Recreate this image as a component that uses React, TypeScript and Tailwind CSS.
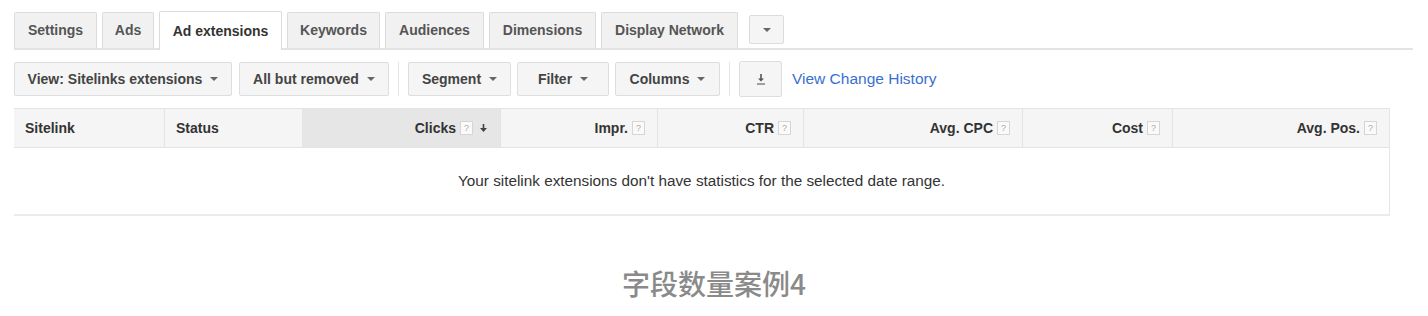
const tabs = [
  { label: "Settings", w: "w-[83px]" },
  { label: "Ads", w: "w-[52px]" },
  { label: "Ad extensions", w: "w-[123px]", active: true },
  { label: "Keywords", w: "w-[93px]" },
  { label: "Audiences", w: "w-[99px]" },
  { label: "Dimensions", w: "w-[107px]" },
  { label: "Display Network", w: "w-[137px]" },
];

const cols = [
  { label: "Sitelink", w: "w-[150px]", left: true },
  { label: "Status", w: "w-[138px]", left: true },
  { label: "Clicks", w: "w-[198px]", sorted: true },
  { label: "Impr.", w: "w-[157px]" },
  { label: "CTR", w: "w-[146px]" },
  { label: "Avg. CPC", w: "w-[219px]" },
  { label: "Cost", w: "w-[150px]" },
  { label: "Avg. Pos.", w: "flex-1" },
];

function Caret() {
  return (
    <span className="inline-block w-0 h-0 ml-[8px] border-l-[4px] border-r-[4px] border-t-[4px] border-l-transparent border-r-transparent border-t-[#666] align-middle" />
  );
}

function Help() {
  return (
    <span className="inline-flex items-center justify-center w-[13px] h-[14px] ml-[4px] border border-[#d6d6d6] bg-[#fafafa] text-[9px] font-normal text-[#aaa] leading-none">
      ?
    </span>
  );
}

function ToolButton({ label, w }: { label: string; w: string }) {
  return (
    <button className={`${w} h-[34px] flex items-center justify-center rounded-[2px] border border-[#dedede] bg-[#f5f5f5] text-[14px] font-bold text-[#444]`}>
      {label}
      <Caret />
    </button>
  );
}

export default function App() {
  return (
    <div className="w-[1428px] h-[316px] bg-white font-['Liberation_Sans',Arial,sans-serif]">
      <div className="pl-[14px] pr-[15px] pt-[12px]">
        <div className="flex items-end gap-[5px] border-b-2 border-[#e3e3e3] h-[38px]">
          {tabs.map((t) =>
            t.active ? (
              <div
                key={t.label}
                className={`${t.w} h-[39px] -mb-[2px] flex items-center justify-center border border-b-0 border-[#dcdcdc] bg-white text-[14px] font-bold text-[#333] rounded-t-[2px]`}
              >
                {t.label}
              </div>
            ) : (
              <div
                key={t.label}
                className={`${t.w} h-[36px] flex items-center justify-center border border-b-0 border-[#dcdcdc] bg-[#f1f1f1] text-[14px] font-bold text-[#555] rounded-t-[2px]`}
              >
                {t.label}
              </div>
            )
          )}
          <div className="ml-[6px] mb-[4px] w-[35px] h-[29px] flex items-center justify-center rounded-[2px] border border-[#dcdcdc] bg-[#f5f5f5]">
            <span className="w-0 h-0 border-l-[4px] border-r-[4px] border-t-[4px] border-l-transparent border-r-transparent border-t-[#666]" />
          </div>
        </div>

        <div className="flex items-center h-[36px] mt-[11px]">
          <ToolButton label="View: Sitelinks extensions" w="w-[218px]" />
          <div className="w-[7px]" />
          <ToolButton label="All but removed" w="w-[150px]" />
          <div className="w-px h-[34px] bg-[#e6e6e6] mx-[9px]" />
          <ToolButton label="Segment" w="w-[103px]" />
          <div className="w-[6px]" />
          <ToolButton label="Filter" w="w-[92px]" />
          <div className="w-[6px]" />
          <ToolButton label="Columns" w="w-[105px]" />
          <div className="w-px h-[34px] bg-[#e6e6e6] mx-[9px]" />
          <button className="w-[43px] h-[36px] flex flex-col items-center justify-center rounded-[2px] border border-[#dedede] bg-[#f5f5f5]">
            <svg width="10" height="12" viewBox="0 0 10 12">
              <path d="M5 1v6" stroke="#555" strokeWidth="1.6" />
              <path d="M2 5.5l3 3 3-3z" fill="#555" />
              <path d="M1 11h8" stroke="#666" strokeWidth="1.2" />
            </svg>
          </button>
          <a className="ml-[10px] text-[15.5px] text-[#3a6fcf]">View Change History</a>
        </div>

        <div className="mt-[11px] w-[1376px] border-r border-[#e6e6e6] border-b-2 border-b-[#ebebeb]">
          <div className="flex h-[40px] bg-[#f5f5f5] border-t border-b border-[#e4e4e4]">
            {cols.map((c, i) => (
              <div
                key={c.label}
                className={`${c.w} flex items-center text-[14px] font-bold text-[#333] ${
                  c.left ? "justify-start pl-[11px]" : "justify-end pr-[12px]"
                } ${i > 0 ? "border-l border-[#e4e4e4]" : ""} ${c.sorted ? "bg-[#e6e6e6] pr-[8px]" : ""}`}
              >
                {c.label}
                {!c.left && <Help />}
                {c.sorted && (
                  <svg className="ml-[6px]" width="9" height="10" viewBox="0 0 9 10">
                    <path d="M4.5 1v5" stroke="#444" strokeWidth="1.6" />
                    <path d="M1 5h7l-3.5 4z" fill="#444" />
                  </svg>
                )}
              </div>
            ))}
          </div>
          <div className="h-[66px] flex items-center justify-center text-[15.3px] text-[#333]">
            Your sitelink extensions don't have statistics for the selected date range.
          </div>
        </div>
      </div>

      <div className="mt-[53px] text-center text-[28px] font-medium text-[#8a8a8a] font-['Noto_Sans_CJK_SC','Noto_Sans',sans-serif] leading-none">
        字段数量案例4
      </div>
    </div>
  );
}
